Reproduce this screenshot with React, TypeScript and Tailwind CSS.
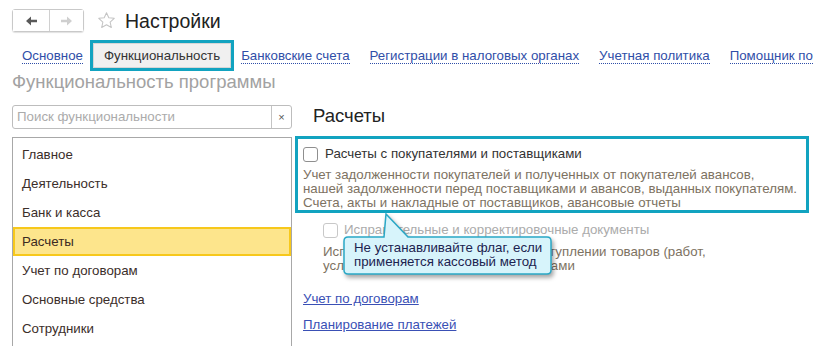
import React from 'react';

const sections = [
  'Главное',
  'Деятельность',
  'Банк и касса',
  'Расчеты',
  'Учет по договорам',
  'Основные средства',
  'Сотрудники',
];

const tabs = ['Основное', 'Функциональность', 'Банковские счета', 'Регистрации в налоговых органах', 'Учетная политика', 'Помощник по'];

export default function App() {
  return (
    <div className="relative w-[816px] h-[346px] overflow-hidden bg-white font-['Liberation_Sans',Arial,sans-serif] text-[13.3px] text-[#333]">
      {/* header */}
      <div className="flex items-center ml-[12px] mt-[9px] h-[23px]">
        <div className="flex h-[23px] w-[72px] rounded-[3px] border border-[#c9c9c9] shadow-[0_1px_1px_rgba(0,0,0,0.12)]">
          <button className="flex w-[37px] items-center justify-center border-r border-[#d0d0d0] bg-white">
            <svg width="11" height="10" viewBox="0 0 11 10">
              <path d="M0 5 L5 0.5 V3.8 H11 V6.2 H5 V9.5 Z" fill="#595959" />
            </svg>
          </button>
          <button className="flex flex-1 items-center justify-center bg-white">
            <svg width="11" height="10" viewBox="0 0 11 10">
              <path d="M11 5 L6 0.5 V3.8 H0 V6.2 H6 V9.5 Z" fill="#cfcfcf" />
            </svg>
          </button>
        </div>
        <svg className="ml-[13px]" width="19" height="19" viewBox="0 0 24 24">
          <path
            d="M12 2.2 L14.9 8.6 L21.8 9.3 L16.6 14 L18.1 20.9 L12 17.4 L5.9 20.9 L7.4 14 L2.2 9.3 L9.1 8.6 Z"
            fill="none"
            stroke="#c4c4c4"
            strokeWidth="1.3"
            strokeLinejoin="round"
          />
        </svg>
        <div className="ml-[9px] text-[19.5px] leading-[24px] text-[#222]">Настройки</div>
      </div>

      {/* tabs */}
      <div className="flex items-center ml-[12px] mt-[8px] h-[31px] whitespace-nowrap">
        {tabs.map((t, i) =>
          i === 1 ? (
            <div key={t} className="border-[3px] border-[#12a3c0] -ml-[3px] -mr-[3px]">
              <div className="h-[25px] px-[10px] flex items-center bg-[#f0f0f0] border border-[#d6d6d6] text-[#333]">{t}</div>
            </div>
          ) : (
            <div key={t} className="px-[10px]">
              <span className="text-[#2f4ea8] border-b border-dotted border-[#2f4ea8] leading-[15px] inline-block">{t}</span>
            </div>
          ),
        )}
      </div>

      <div className="ml-[12px] text-[18.5px] leading-[22px] text-[#a2a2a2]">Функциональность программы</div>

      {/* main */}
      <div className="flex mt-[12px]">
        <div className="ml-[12px] w-[280px] flex flex-col">
          <div className="flex h-[24px] rounded-[3px] border border-[#bdbdbd]">
            <div className="flex-1 flex items-center pl-[4px] text-[#ababab]">Поиск функциональности</div>
            <div className="w-[20px] flex items-center justify-center border-l border-[#c4c4c4] text-[#555] text-[11px]">×</div>
          </div>
          <div className="mt-[8px] h-[220px] border border-[#a8a8a8] border-b-0 pt-[2px]">
            {sections.map((s) =>
              s === 'Расчеты' ? (
                <div key={s} className="h-[29px] flex items-center pl-[7px] bg-[#fde58c] border-2 border-[#f7c81b] text-[#3b2a22]">
                  {s}
                </div>
              ) : (
                <div key={s} className="h-[29px] flex items-center pl-[9px] text-[#3b2e2a]">
                  {s}
                </div>
              ),
            )}
          </div>
        </div>

        {/* right */}
        <div className="flex-1 flex flex-col">
          <div className="pl-[21px] text-[18.5px] leading-[22px] text-[#222]">Расчеты</div>
          <div className="mt-[9px] ml-[3px] w-[514px] border-[3px] border-[#12a3c0] px-[5px] pt-[7px]">
            <div className="flex items-center h-[16px]">
              <div className="w-[15px] h-[15px] rounded-[3px] border border-[#8f8f8f] bg-white" />
              <span className="ml-[7px] text-[#333]">Расчеты с покупателями и поставщиками</span>
            </div>
            <div className="mt-[6px] leading-[14px] text-[#7d7262] whitespace-nowrap">
              Учет задолженности покупателей и полученных от покупателей авансов,
              <br />
              нашей задолженности перед поставщиками и авансов, выданных покупателям.
              <br />
              Счета, акты и накладные от поставщиков, авансовые отчеты
            </div>
          </div>
          <div className="pl-[31px] mt-[9px] flex items-center h-[16px]">
            <div className="w-[15px] h-[15px] rounded-[3px] border border-[#c8c8c8] bg-white" />
            <span className="ml-[6px] text-[#ababab]">Исправительные и корректировочные документы</span>
          </div>
          <div className="pl-[31px] mt-[7px] leading-[14px] text-[#7d7262] whitespace-nowrap">
            Исправительные документы при поступлении товаров (работ,
            <br />
            услуг) и корректировочные документами
          </div>
          <div className="pl-[11px] mt-[18px] leading-[16px]">
            <span className="text-[#3a50b5] underline">Учет по договорам</span>
          </div>
          <div className="pl-[11px] mt-[10px] leading-[16px]">
            <span className="text-[#3a50b5] underline">Планирование платежей</span>
          </div>
        </div>
      </div>

      {/* callout */}
      <div className="absolute left-[340px] top-[210px] w-[220px] h-[72px]">
        <svg className="absolute inset-0 drop-shadow-[2px_3px_2px_rgba(0,0,0,0.35)]" width="220" height="72" viewBox="0 0 220 72">
          <path
            d="M8 27 H44 L46 4 L68 27 H207 Q211 27 211 31 V60 Q211 64 207 64 H8 Q4 64 4 60 V31 Q4 27 8 27 Z"
            fill="#d7f4fb"
            stroke="#2aa8c6"
            strokeWidth="1.5"
          />
        </svg>
        <div className="absolute left-[14px] top-[31px] leading-[14px] text-[#1c2350] whitespace-nowrap">
          Не устанавливайте флаг, если
          <br />
          применяется кассовый метод
        </div>
      </div>
    </div>
  );
}
